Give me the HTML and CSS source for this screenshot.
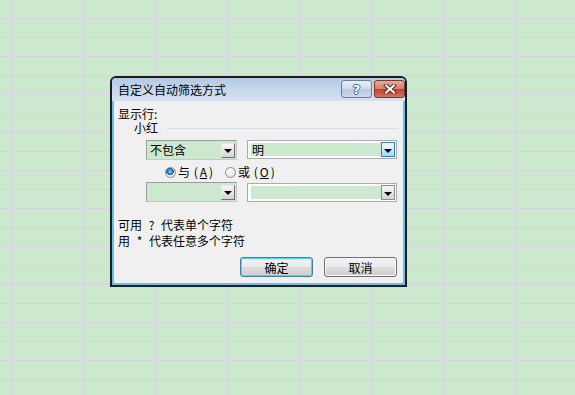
FILE: index.html
```html
<!doctype html>
<html lang="zh-CN">

<head>
    <meta charset="UTF-8">
    <title>自定义自动筛选方式</title>
    <link rel="stylesheet" href="styles.css">
</head>

<body>
    <!-- 对话框 -->
    <div class="window">
        <div class="titlebar">
            <span class="title">自定义自动筛选方式</span>
            <div class="caption-btns">
                <span class="cap-btn help">?</span>
                <span class="cap-btn close">
                    <svg width="14" height="10" viewBox="0 0 14 10">
                        <path d="M3 1.5 L11 8.5 M11 1.5 L3 8.5" stroke="#5a2a22" stroke-width="4" stroke-linecap="square" />
                        <path d="M3 1.5 L11 8.5 M11 1.5 L3 8.5" stroke="#ffffff" stroke-width="2" stroke-linecap="square" />
                    </svg>
                </span>
            </div>
        </div>

        <div class="client">
            <div class="label">显示行:</div>

            <div class="group">
                <span>小红</span>
                <span class="rule"></span>
            </div>

            <!-- 条件一 -->
            <div class="cond-row">
                <div class="combo list">
                    <span class="val">不包含</span>
                    <span class="drop"><i class="arrow"></i></span>
                </div>
                <div class="combo edit">
                    <span class="val">明</span>
                    <span class="drop hot"><i class="arrow"></i></span>
                </div>
            </div>

            <div class="radio-row">
                <label class="radio"><span class="dot checked"></span>与 (<u>A</u>)</label>
                <label class="radio"><span class="dot"></span>或 (<u>O</u>)</label>
            </div>

            <!-- 条件二 -->
            <div class="cond-row second">
                <div class="combo list">
                    <span class="val"></span>
                    <span class="drop"><i class="arrow"></i></span>
                </div>
                <div class="combo edit">
                    <span class="val"></span>
                    <span class="drop"><i class="arrow"></i></span>
                </div>
            </div>

            <div class="hint">
                <div>可用 ? 代表单个字符</div>
                <div>用 * 代表任意多个字符</div>
            </div>

            <div class="actions">
                <button class="btn default">确定</button>
                <button class="btn">取消</button>
            </div>
        </div>
    </div>
</body>

</html>
```

FILE: styles.css
```css
/* 表格背景 */
body {
    margin: 0;
    height: 395px;
    overflow: hidden;
    font-family: "Noto Sans CJK SC", "Liberation Sans", sans-serif;
    font-size: 12px;
    color: #000;
    background-color: #cce8cf;
    background-image:
        linear-gradient(to right, #d5d3e3 1px, transparent 1px),
        linear-gradient(to bottom, #d5d3e3 1px, transparent 1px);
    background-size: 72px 19px;
    background-position: 12px 18px;
}

/* 对话框外框 */
.window {
    width: 293px;
    height: 207px;
    margin: 76px 0 0 110px;
    border: 2px solid #1c1c1c;
    border-radius: 6px 6px 0 0;
    display: flex;
    flex-direction: column;
    background: #c6d7ec;
}

.titlebar {
    height: 23px;
    display: flex;
    align-items: flex-start;
    justify-content: space-between;
    border-radius: 4px 4px 0 0;
    background: linear-gradient(to bottom, #b3c8e3 0%, #c4d6ec 45%, #d4e1f1 100%);
}

.title {
    line-height: 23px;
    padding-left: 6px;
}

.caption-btns {
    display: flex;
    gap: 2px;
    margin-top: 2px;
}

.cap-btn {
    width: 29px;
    height: 16px;
    border: 1px solid #6a7f9c;
    border-radius: 3px;
    display: flex;
    align-items: center;
    justify-content: center;
}

.help {
    background: linear-gradient(to bottom, #e6eef8 0%, #cfdcec 48%, #b7c9df 52%, #c9d8ea 100%);
    color: #fff;
    font-family: "DejaVu Sans", sans-serif;
    font-weight: bold;
    font-size: 13px;
    text-shadow: -1px 0 #4d5f78, 1px 0 #4d5f78, 0 -1px #4d5f78, 0 1px #4d5f78;
}

.close {
    border-color: #7b3a31;
    background: linear-gradient(to bottom, #e9a99a 0%, #d77d69 48%, #c2432d 52%, #d3735b 100%);
}

/* 客户区 */
.client {
    flex: 1;
    border: 2px solid #63c0ec;
    border-top: none;
    background: #f0f0f0;
    padding: 6px 6px 0 4px;
    display: flex;
    flex-direction: column;
}

.label {
    line-height: 14px;
}

.group {
    display: flex;
    align-items: center;
    line-height: 14px;
    padding-left: 16px;
}

.rule {
    flex: 1;
    height: 1px;
    margin: 1px -1px 0 9px;
    background: #d6dfe8;
}

.cond-row {
    display: flex;
    align-items: flex-start;
    gap: 10px;
    margin-top: 5px;
    padding-left: 28px;
}

.cond-row.second {
    margin-top: 3px;
}

.combo {
    display: flex;
    align-items: center;
    box-sizing: border-box;
}

.combo .val {
    flex: 1;
    align-self: stretch;
    background: #cce8cf;
    line-height: 16px;
}

.combo.list {
    width: 92px;
    height: 20px;
    border: 1px solid #9c9c9c;
    border-right-color: #c8c8c8;
    border-bottom-color: #c8c8c8;
    padding: 1px 1px 1px 1px;
    background: #cce8cf;
}

.combo.list .val {
    padding-left: 2px;
}

.combo.edit {
    width: 152px;
    height: 19px;
    border: 1px solid #a8acb2;
    padding: 2px 1px 2px 3px;
    background: #fff;
}

.combo.edit .val {
    padding-left: 1px;
    line-height: 13px;
}

.second .combo.edit {
    margin-top: 1px;
}

.drop {
    width: 14px;
    height: 15px;
    box-sizing: border-box;
    border: 1px solid #6f6f6f;
    border-top-color: #e8e8e8;
    border-left-color: #e8e8e8;
    background: linear-gradient(to bottom, #f6f6f6, #d6d6d6);
    display: flex;
    align-items: center;
    justify-content: center;
}

.combo.edit .drop {
    height: 15px;
    margin: -2px 0 -2px 0;
    border: 1px solid #8d8d8d;
}

.combo.edit .drop.hot {
    border-color: #3c7fb1;
    background: linear-gradient(to bottom, #eaf6fd 0%, #d9f0fc 48%, #bee6fd 52%, #a7d9f5 100%);
}

.arrow {
    width: 0;
    height: 0;
    margin-top: 2px;
    border-left: 4px solid transparent;
    border-right: 4px solid transparent;
    border-top: 4px solid #000;
}

/* 单选按钮 */
.radio-row {
    display: flex;
    gap: 12px;
    margin-top: 5px;
    padding-left: 47px;
    line-height: 14px;
}

.radio {
    display: flex;
    align-items: center;
    gap: 2px;
    word-spacing: 1px;
}

.dot {
    width: 11px;
    height: 11px;
    box-sizing: border-box;
    border-radius: 50%;
    border: 1px solid #8e8f8f;
    background: radial-gradient(circle at 40% 35%, #ffffff 0%, #f0f0f0 45%, #cfcfcf 100%);
}

.dot.checked {
    background:
        radial-gradient(circle at 45% 40%, #8fd3f9 0%, #2a7fcf 35%, #0c4f9a 50%, transparent 52%),
        radial-gradient(circle, #ffffff 0%, #e4e4e4 100%);
}

.hint {
    margin-top: 15px;
    line-height: 16px;
    word-spacing: 4px;
}

/* 按钮 */
.actions {
    display: flex;
    justify-content: flex-end;
    gap: 11px;
    margin-top: 8px;
}

.btn {
    width: 73px;
    height: 20px;
    padding: 0;
    font-family: inherit;
    font-size: 12px;
    color: #000;
    border: 1px solid #707070;
    border-radius: 3px;
    background: linear-gradient(to bottom, #f2f2f2 0%, #ebebeb 48%, #dddddd 52%, #cfcfcf 100%);
    box-shadow: inset 0 0 0 1px #f8f8f8;
}

.btn.default {
    border-color: #3c7fb1;
    box-shadow: inset 0 0 0 1px #48d7fb;
}
```
